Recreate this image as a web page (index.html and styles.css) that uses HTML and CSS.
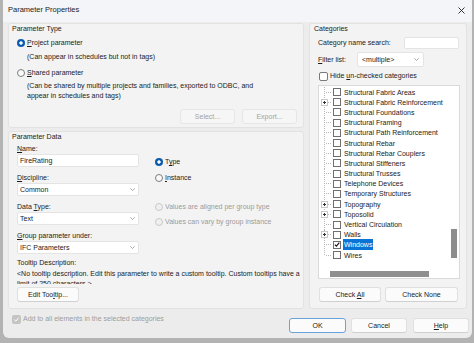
FILE: index.html
```html
<!DOCTYPE html>
<html>
	<head>
		<meta charset="utf-8" />
		<title>Parameter Properties</title>
		<link rel="stylesheet" href="styles.css">
	</head>
	<body>
		<div class="dialog">
			<div class="titlebar">
				<span>Parameter Properties</span>
				<svg class="close" width="7" height="7" viewBox="0 0 7 7"><path d="M0.5 0.5L6.5 6.5M6.5 0.5L0.5 6.5" stroke="#222" stroke-width="0.9" fill="none"/></svg>
			</div>
			<div class="main">
				<div class="left">
					<!-- parameter type -->
					<div class="panel ptype">
						<div class="legend">Parameter Type</div>
						<div class="radio r1"><i class="dot on"></i><span><u>P</u>roject parameter</span></div>
						<div class="desc d1">(Can appear in schedules but not in tags)</div>
						<div class="radio r2"><i class="dot"></i><span><u>S</u>hared parameter</span></div>
						<div class="desc d2">(Can be shared by multiple projects and families, exported to ODBC, and<br>appear in schedules and tags)</div>
						<div class="btnrow">
							<button class="btn off">Select...</button>
							<button class="btn off">Export...</button>
						</div>
					</div>
					<!-- parameter data -->
					<div class="panel pdata">
						<div class="legend">Parameter Data</div>
						<div class="inner">
							<div class="cols">
								<div class="fields">
									<div class="lbl"><u>N</u>ame:</div>
									<div class="field">FireRating</div>
									<div class="lbl gap"><u>D</u>iscipline:</div>
									<div class="field">Common<svg width="5" height="3" viewBox="0 0 5 3"><path d="M0.3 0.3L2.5 2.5L4.7 0.3" stroke="#888" stroke-width="0.7" fill="none"/></svg></div>
									<div class="lbl gap">Data <u>T</u>ype:</div>
									<div class="field">Text<svg width="5" height="3" viewBox="0 0 5 3"><path d="M0.3 0.3L2.5 2.5L4.7 0.3" stroke="#888" stroke-width="0.7" fill="none"/></svg></div>
									<div class="lbl gap"><u>G</u>roup parameter under:</div>
									<div class="field">IFC Parameters<svg width="5" height="3" viewBox="0 0 5 3"><path d="M0.3 0.3L2.5 2.5L4.7 0.3" stroke="#888" stroke-width="0.7" fill="none"/></svg></div>
								</div>
								<div class="radios">
									<div class="radio"><i class="dot on"></i><span>T<u>y</u>pe</span></div>
									<div class="radio ins"><i class="dot"></i><span><u>I</u>nstance</span></div>
									<div class="radio dis va"><i class="dot"></i><span>Values are aligned per group type</span></div>
									<div class="radio dis vv"><i class="dot"></i><span>Values can vary by group instance</span></div>
								</div>
							</div>
							<div class="lbl tiplbl">Tooltip Description:</div>
							<div class="tip">&lt;No tooltip description. Edit this parameter to write a custom tooltip. Custom tooltips have a<br>limit of 250 characters.&gt;</div>
							<button class="btn edit">Edit Too<u>l</u>tip...</button>
						</div>
					</div>
				</div>
				<!-- categories -->
				<div class="panel cats">
					<div class="legend">Categories</div>
					<div class="crow search">
						<span>Category name search:</span>
						<div class="box sbox"></div>
					</div>
					<div class="crow filter">
						<span><u>F</u>ilter list:</span>
						<div class="box fbox">&lt;multiple&gt;<svg width="5" height="3" viewBox="0 0 5 3"><path d="M0.3 0.3L2.5 2.5L4.7 0.3" stroke="#888" stroke-width="0.7" fill="none"/></svg></div>
					</div>
					<div class="crow hide"><i class="chk"></i><span>Hide <u>u</u>n-checked categories</span></div>
					<div class="tree">
						<ul>
							<li><b></b><i></i><span>Structural Fabric Areas</span></li>
							<li><b class="plus"></b><i></i><span>Structural Fabric Reinforcement</span></li>
							<li><b></b><i></i><span>Structural Foundations</span></li>
							<li><b></b><i></i><span>Structural Framing</span></li>
							<li><b></b><i></i><span>Structural Path Reinforcement</span></li>
							<li><b></b><i></i><span>Structural Rebar</span></li>
							<li><b></b><i></i><span>Structural Rebar Couplers</span></li>
							<li><b></b><i></i><span>Structural Stiffeners</span></li>
							<li><b></b><i></i><span>Structural Trusses</span></li>
							<li><b></b><i></i><span>Telephone Devices</span></li>
							<li><b></b><i></i><span>Temporary Structures</span></li>
							<li><b class="plus"></b><i></i><span>Topography</span></li>
							<li><b class="plus"></b><i></i><span>Toposolid</span></li>
							<li><b></b><i></i><span>Vertical Circulation</span></li>
							<li><b class="plus"></b><i></i><span>Walls</span></li>
							<li class="sel"><b></b><i><svg width="7" height="7" viewBox="0 0 7 7"><path d="M1 3.6L2.8 5.4L6.2 1.2" stroke="#111" stroke-width="1.3" fill="none"/></svg></i><span>Windows</span></li>
							<li><b></b><i></i><span>Wires</span></li>
						</ul>
						<div class="vthumb"></div>
						<div class="hthumb"></div>
					</div>
					<div class="cbtns">
						<button class="btn call">Check <u>A</u>ll</button>
						<button class="btn cnone">Check None</button>
					</div>
				</div>
			</div>
			<div class="footer">
				<div class="addall"><i class="chk on"><svg width="7" height="7" viewBox="0 0 7 7"><path d="M1.2 3.6L2.8 5.2L5.8 1.6" stroke="#fff" stroke-width="1" fill="none"/></svg></i><span>Add to all elements in the selected categories</span></div>
				<div class="fbtns">
					<button class="btn ok">OK</button>
					<button class="btn cancel">Cancel</button>
					<button class="btn help"><u>H</u>elp</button>
				</div>
			</div>
		</div>
	</body>
</html>
```

FILE: styles.css
```css
*{margin: 0;padding: 0;box-sizing: border-box;list-style: none;}
body{background: #b3b3b3;font-family: "Liberation Sans", Arial, sans-serif;font-size: 7px;line-height: 10px;color: #1b1b1b;}
u{text-decoration: underline;}
.dialog{margin-left: 3px;width: 469px;height: 338px;background: #ececec;border-radius: 0 0 6px 6px;overflow: hidden;}
.titlebar{height: 22px;display: flex;align-items: center;justify-content: space-between;padding: 0 7px 2px 5px;background: #f3f5f8;font-size: 7.5px;}
.main{display: flex;gap: 5px;padding: 1px 5px 0;height: 287px;}
.left{width: 296px;display: flex;flex-direction: column;gap: 3px;}
.panel{background: #f3f3f3;border: 1px solid #e2e2e2;border-radius: 3px;}
.legend{padding-left: 3px;height: 10px;}

/* radios and checks */
.radio{display: flex;align-items: center;gap: 2px;height: 10px;}
.dot{display: block;width: 8px;height: 8px;border-radius: 50%;border: 1px solid #7d7d7d;background: #fafafa;}
.dot.on{border: none;background: radial-gradient(circle, #fff 0 1.4px, #0b5cad 1.9px);}
.radio.dis{color: #9b9b9b;}
.radio.dis .dot{border-color: #cacaca;background: #efefef;}
.chk{display: block;width: 9px;height: 9px;border: 1px solid #7a7a7a;border-radius: 2px;background: #fff;}

/* parameter type */
.ptype{padding: 0 6px 3px 0;}
.ptype .radio{margin-left: 8px;}
.ptype .r1{margin-top: 4px;}
.ptype .r2{margin-top: 6px;}
.desc{padding-left: 18px;}
.d1{margin-top: 4px;}
.d2{margin-top: 3px;}
.btnrow{display: flex;justify-content: flex-end;gap: 7px;margin-top: 8px;}
.btnrow .btn{width: 55px;}

.btn{font: inherit;height: 15px;background: #fbfbfb;border: 1px solid #e0e0e0;border-bottom-color: #d0d0d0;border-radius: 3px;color: #1b1b1b;text-align: center;}
.btn.off{color: #a3a3a3;background: #f6f6f6;border-color: #e6e6e6;}

/* parameter data */
.pdata{flex: 1;padding-bottom: 6px;}
.pdata .inner{padding-left: 8px;}
.cols{display: flex;gap: 16px;margin-top: 2px;}
.fields{width: 122px;}
.lbl{height: 10px;}
.lbl.gap{margin-top: 6px;}
.field{height: 13px;background: #fff;border: 1px solid #e4e4e4;border-radius: 2px;display: flex;align-items: center;justify-content: space-between;padding: 0 3px 0 2px;}
.radios{padding-top: 13px;}
.radios .ins{margin-top: 6px;}
.radios .va{margin-top: 19px;}
.radios .vv{margin-top: 5px;}
.tiplbl{margin-top: 4px;}
.tip{margin-top: 1px;height: 15px;overflow: hidden;white-space: nowrap;}
.edit{margin-top: 3px;width: 62px;}

/* categories */
.cats{width: 158px;}
.cats .legend{padding-left: 4px;}
.crow{display: flex;align-items: center;margin-left: 8px;}
.search{margin-top: 3px;margin-right: 7px;justify-content: space-between;height: 12px;}
.box{background: #fff;border: 1px solid #e4e4e4;border-radius: 2px;}
.sbox{width: 55px;height: 12px;}
.filter{margin-top: 3px;height: 15px;}
.filter > span{width: 39px;}
.fbox{width: 67px;height: 15px;display: flex;align-items: center;justify-content: space-between;padding: 0 4px 0 4px;}
.hide{margin-top: 4px;height: 10px;margin-left: 9px;gap: 2px;}
.tree{position: relative;margin: 4px 0 0 8px;width: 142px;height: 194px;background: #fff;border: 1px solid #dadada;overflow: hidden;}
.tree ul{padding-top: 1px;}
.tree li{display: flex;align-items: center;height: 10.2px;padding-left: 2px;white-space: nowrap;
background: repeating-linear-gradient(to bottom, #b8b8b8 0 1px, transparent 1px 2px) 5px 0/1px 100% no-repeat,
repeating-linear-gradient(to right, #b8b8b8 0 1px, transparent 1px 2px) 7px 50%/6px 1px no-repeat;}
.tree li:last-child{background-size: 1px 50%, 6px 1px;}
.tree li b{display: block;width: 7px;height: 7px;margin-right: 5px;}
.tree li b.plus{background: #fff linear-gradient(#333, #333) center/3px 1px no-repeat;border: 1px solid #c9c9c9;position: relative;}
.tree li b.plus::after{content: "";position: absolute;left: 2px;top: 1px;width: 1px;height: 3px;background: #333;}
.tree li i{display: flex;align-items: center;justify-content: center;width: 8px;height: 8px;border: 1px solid #6f6f6f;background: #fff;margin-right: 2px;}
.tree li span{padding: 0 1px;line-height: 11px;}
.tree li.sel span{background: #0a74d6;color: #fff;}
.vthumb{position: absolute;right: 2px;top: 143px;width: 6px;height: 29px;background: #8d8d8d;}
.hthumb{position: absolute;left: 11px;bottom: 1px;width: 99px;height: 6px;background: #8f8f8f;}
.cbtns{display: flex;gap: 4px;margin: 8px 0 0 9px;}
.call{width: 62px;}
.cnone{width: 73px;}

/* footer */
.footer{display: flex;align-items: flex-start;justify-content: space-between;padding: 0 3px 0 9px;}
.addall{display: flex;align-items: center;gap: 2px;margin-top: 5px;color: #9d9d9d;}
.chk.on{display: flex;align-items: center;justify-content: center;background: #c4c4c4;border-color: #c4c4c4;}
.fbtns{display: flex;margin-top: 9px;}
.ok{width: 57px;border: 1px solid #6aa2dc;margin-right: 5px;}
.cancel{width: 56px;margin-right: 6px;}
.help{width: 56px;}
```
